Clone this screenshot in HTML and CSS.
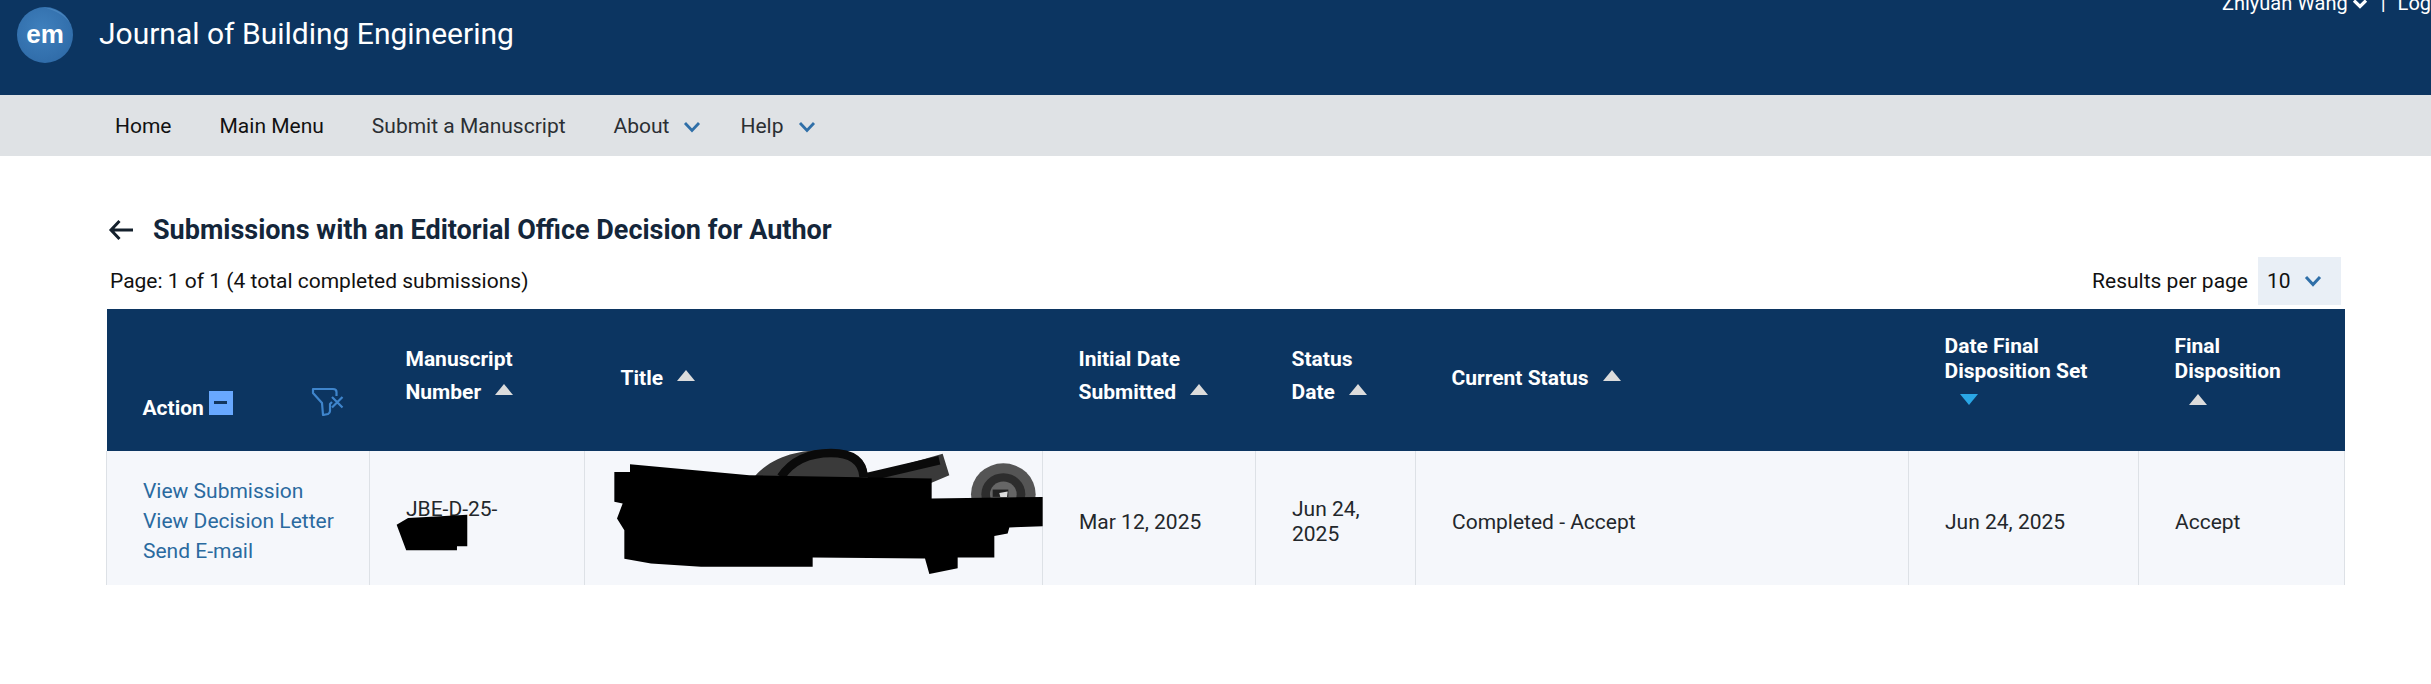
FILE: index.html
```html
<!DOCTYPE html>
<html lang="en">
<head>
<meta charset="utf-8">
<title>Submissions with an Editorial Office Decision for Author</title>
<link rel="stylesheet" href="styles.css">
</head>
<body>
<header class="topbar">
  <div class="brand">
    <svg class="logo" viewBox="0 0 56 56" width="56" height="56" aria-hidden="true">
      <defs><radialGradient id="lg" cx="45%" cy="40%" r="65%"><stop offset="0" stop-color="#3f80bd"/><stop offset="1" stop-color="#2f6ba8"/></radialGradient></defs>
      <circle cx="28" cy="28" r="28" fill="url(#lg)"/>
      <path d="M29 1 A28 28 0 0 1 53 16 C47 8 39 4 29 1Z" fill="#5590c6" opacity=".6"/>
      <text x="28" y="36" text-anchor="middle" class="logo-text">em</text>
    </svg>
    <span class="journal">Journal of Building Engineering</span>
  </div>
  <div class="user">
    <span>Zhiyuan Wang</span>
    <svg class="user-chev" viewBox="0 0 16 10" width="16" height="10" aria-hidden="true"><path d="M2 1.5 L8 7.5 L14 1.5" fill="none" stroke="#fff" stroke-width="3.2"/></svg>
    <span class="sep">|</span>
    <span>Logout</span>
  </div>
</header>
<nav class="navbar">
  <a class="nav-item nav-strong">Home</a>
  <a class="nav-item nav-strong">Main Menu</a>
  <a class="nav-item">Submit a Manuscript</a>
  <a class="nav-item">About<svg class="chev" viewBox="0 0 18 12" width="18" height="12" aria-hidden="true"><path d="M2 2 L9 9.5 L16 2" fill="none" stroke="#2f6fa8" stroke-width="2.8"/></svg></a>
  <a class="nav-item">Help<svg class="chev" viewBox="0 0 18 12" width="18" height="12" aria-hidden="true"><path d="M2 2 L9 9.5 L16 2" fill="none" stroke="#2f6fa8" stroke-width="2.8"/></svg></a>
</nav>
<main class="content">
  <div class="title-row">
    <svg class="back" viewBox="0 0 26 22" width="26" height="22" aria-hidden="true"><path d="M25 11 H3 M11.5 2 L3 11 L11.5 20" fill="none" stroke="#14202c" stroke-width="3"/></svg>
    <h1>Submissions with an Editorial Office Decision for Author</h1>
  </div>
  <div class="meta-row">
    <span>Page: 1 of 1 (4 total completed submissions)</span>
    <div class="per-page">
      <span>Results per page</span>
      <span class="select">10<svg viewBox="0 0 18 12" width="18" height="12" aria-hidden="true"><path d="M2 2 L9 9.5 L16 2" fill="none" stroke="#2f6fa8" stroke-width="3"/></svg></span>
    </div>
  </div>
  <table class="grid">
    <colgroup>
      <col class="c1"><col class="c2"><col class="c3"><col class="c4"><col class="c5"><col class="c6"><col class="c7"><col class="c8">
    </colgroup>
    <thead>
      <tr>
        <th class="th-action">
          <div class="action-head">
            <span class="action-label">Action<span class="minus"></span></span>
            <svg class="filter" viewBox="0 0 33 29" width="33" height="29" aria-hidden="true"><path d="M25.5 9 V5 Q25.5 2 22 2 H2 V6 L11 16 L12 28 L17 27 Q19 26 19 24 V17 L21 15 M21 10 L31.5 20.5 M31.5 10 L21 20.5" fill="none" stroke="#3f85cc" stroke-width="2.2" stroke-linejoin="round"/></svg>
          </div>
        </th>
        <th class="tall two">Manuscript<br>Number<span class="sort"></span></th>
        <th class="tall one">Title<span class="sort"></span></th>
        <th class="tall two">Initial Date<br>Submitted<span class="sort"></span></th>
        <th class="tall two">Status<br>Date<span class="sort"></span></th>
        <th class="tall one">Current Status<span class="sort"></span></th>
        <th class="stack">Date Final<br>Disposition Set<span class="sort sort-down sort-line"></span></th>
        <th class="stack">Final<br>Disposition<span class="sort sort-line"></span></th>
      </tr>
    </thead>
    <tbody>
      <tr>
        <td class="links"><a>View Submission</a><a>View Decision Letter</a><a>Send E-mail</a></td>
        <td class="masked">JBE-D-25-<br>&nbsp;
          <svg class="mask mask-num" viewBox="780 640 220 120" preserveAspectRatio="none" aria-hidden="true"><path d="M800 675 L830 655 L985 645 L985 740 L958 740 L958 752 L825 752Z" fill="#000"/></svg>
        </td>
        <td class="masked">
          <svg class="mask mask-title" viewBox="0 440 1500 400" preserveAspectRatio="none" aria-hidden="true">
            <path d="M520 530 C570 470 650 448 740 448 C810 448 860 470 860 530 L860 525 L1085 460 L1105 525 L1050 548Z" fill="#3a3a3a"/>
            <path d="M600 530 C640 470 700 458 750 458 C810 458 845 480 848 530 M860 530 L1075 480" fill="none" stroke="#0a0a0a" stroke-width="26"/>
            <ellipse cx="1267" cy="582" rx="97" ry="93" fill="#555"/>
            <ellipse cx="1267" cy="582" rx="66" ry="63" fill="#2d2d2d"/>
            <ellipse cx="1267" cy="582" rx="40" ry="38" fill="#666"/>
            <path d="M1235 568 L1282 568 L1282 590 L1235 590Z" fill="#222"/>
            <path d="M1255 578 L1280 574 L1278 590 L1258 590Z" fill="#ddd"/>
            <path d="M100 515 H147 V492 L505 525 L1052 535 V595 L1385 590 V678 L1285 682 L1280 700 L1240 708 V772 L1130 772 L1130 805 L1045 822 L1032 775 L695 772 V800 L360 800 L210 790 L130 776 V690 L108 655 L125 610 L100 605Z" fill="#000"/>
          </svg>
        </td>
        <td>Mar 12, 2025</td>
        <td>Jun 24,<br>2025</td>
        <td>Completed - Accept</td>
        <td>Jun 24, 2025</td>
        <td>Accept</td>
      </tr>
    </tbody>
  </table>
</main>
</body>
</html>
```
FILE: styles.css
```css
* { box-sizing: border-box; }
html, body { margin: 0; padding: 0; }
body {
  background: #fff;
  font-family: Roboto, "Liberation Sans", sans-serif;
  font-size: 21px;
  line-height: 25px;
  color: #23272b;
  overflow: hidden;
}
.topbar {
  height: 95px;
  background: #0c3561;
  display: flex;
  justify-content: space-between;
  align-items: flex-start;
  color: #fff;
  overflow: hidden;
}
.brand {
  display: flex;
  align-items: center;
  gap: 26px;
  padding: 7px 0 0 17px;
}
.logo { display: block; }
.logo-text {
  font-family: "Liberation Sans", Arial, sans-serif;
  font-weight: 700;
  font-size: 26px;
  fill: #fff;
}
.journal { font-size: 30px; line-height: 56px; margin-top: -3px; }
.user {
  display: flex;
  align-items: center;
  flex: none;
  margin: -9px -29px 0 0;
  font-size: 20px;
  white-space: nowrap;
}
.user-chev { margin: 0 0 0 4px; }
.sep { margin: 0 12px 0 13px; }
.navbar {
  height: 61px;
  background: #dfe2e5;
  display: flex;
  align-items: center;
  gap: 48px;
  padding: 2px 0 0 115px;
}
.nav-item { color: #2b2f33; display: flex; align-items: center; white-space: nowrap; }
.nav-strong { color: #111; }
.chev { margin: 0 -9px 0 14px; }
.content { padding: 0 87px 0 106px; }
.title-row {
  display: flex;
  align-items: center;
  gap: 19px;
  padding: 47px 0 0 2px;
  height: 101px;
}
.back { display: block; }
h1 {
  margin: 0;
  font-size: 27px;
  line-height: 32px;
  font-weight: 700;
  color: #14263a;
}
.meta-row {
  display: flex;
  justify-content: space-between;
  align-items: center;
  height: 48px;
  margin-bottom: 4px;
  padding: 0 3px 0 4px;
  color: #111;
}
.per-page { display: flex; align-items: center; gap: 10px; }
.select {
  width: 83px;
  height: 48px;
  background: #e9eff6;
  display: flex;
  align-items: center;
  gap: 13px;
  padding-left: 9px;
}
.grid {
  width: 2238px;
  table-layout: fixed;
  border-collapse: collapse;
}
.c1 { width: 263px; }
.c2 { width: 215px; }
.c3 { width: 458px; }
.c4 { width: 213px; }
.c5 { width: 160px; }
.c6 { width: 493px; }
.c7 { width: 230px; }
.c8 { width: 206px; }
thead th {
  height: 142px;
  background: #0c3561;
  color: #fff;
  font-weight: 700;
  font-size: 21px;
  line-height: 25px;
  text-align: left;
  vertical-align: middle;
  padding: 0 10px 0 36px;
}
thead th.tall { line-height: 33px; }
thead th.one { padding-bottom: 3px; }
thead th.two { padding-bottom: 8px; }
thead th.stack { padding-bottom: 22px; }
.action-head {
  display: flex;
  align-items: flex-end;
  justify-content: space-between;
  padding-right: 16px;
  margin-top: 48px;
}
.action-label { display: inline-block; }
.minus {
  display: inline-block;
  position: relative;
  margin-left: 5px;
  width: 24px;
  height: 24px;
  background: #68a8ff;
}
.minus::after {
  content: "";
  position: absolute;
  left: 5px;
  top: 10px;
  width: 13px;
  height: 3px;
  background: #12365e;
}
.filter { margin-bottom: 5px; }
.sort {
  display: inline-block;
  width: 0;
  height: 0;
  margin-left: 14px;
  vertical-align: 4px;
  border-left: 9px solid transparent;
  border-right: 9px solid transparent;
  border-bottom: 11px solid #dcdcdc;
}
.sort-line { display: block; margin: 10px 0 0 14px; }
.sort-down {
  border-bottom: 0;
  border-top: 11px solid #2aa7e6;
  margin-left: 15px;
}
tbody td {
  height: 134px;
  background: #f5f7fb;
  border-left: 1px solid #dde1e6;
  border-right: 1px solid #dde1e6;
  padding: 8px 10px 0 36px;
  vertical-align: middle;
}
tbody td.links { padding-top: 6px; }
.links a { display: block; color: #2a6a9f; line-height: 30px; white-space: nowrap; }
.masked { position: relative; overflow: visible; }
.mask { position: absolute; display: block; filter: blur(0.6px); }
.mask-title { left: -4px; top: -4px; width: 500px; height: 133px; }
.mask-num { left: 19px; top: 62px; width: 84px; height: 40px; }
```
